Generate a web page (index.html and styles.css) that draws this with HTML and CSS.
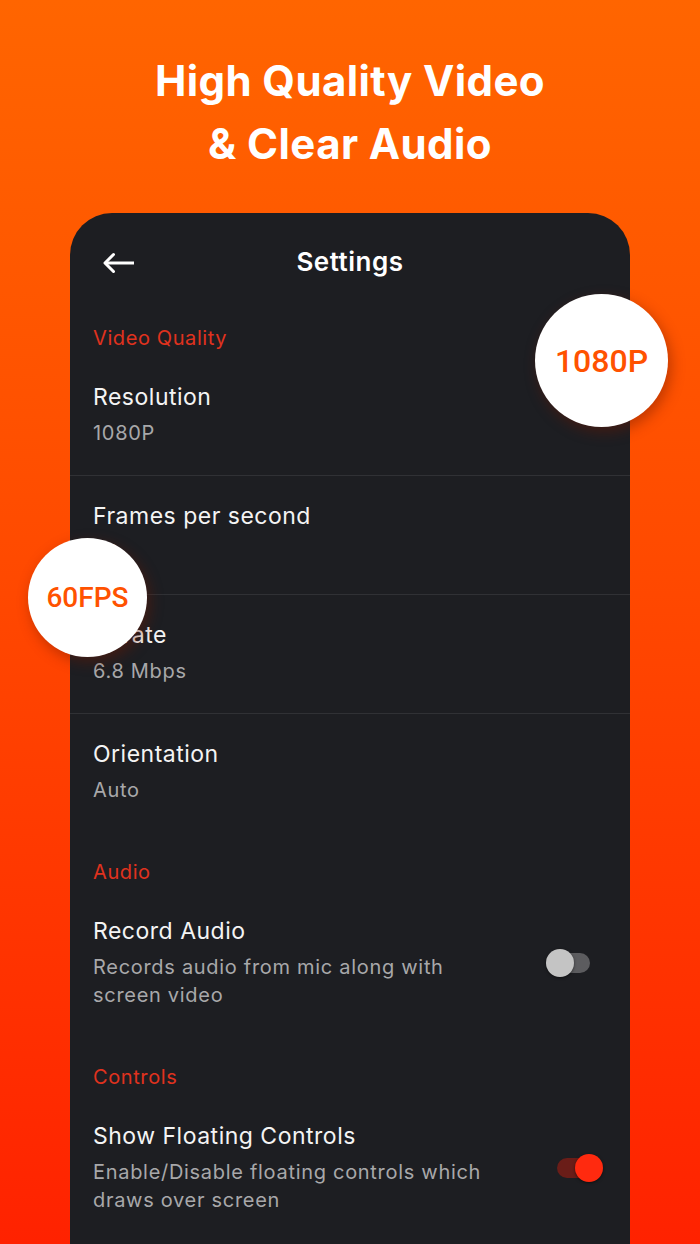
FILE: index.html
```html
<!DOCTYPE html>
<html lang="en">
<head>
    <meta charset="UTF-8">
    <meta name="viewport" content="width=device-width, initial-scale=1.0">
    <title>Settings</title>
    <link rel="stylesheet" href="styles.css">
</head>
<body>
    <h1 class="hero">High Quality Video<br>&amp; Clear Audio</h1>

    <div class="phone">
        <header class="topbar">
            <svg class="back" width="34" height="22" viewBox="0 0 34 22" fill="none" stroke="#fff" stroke-width="3" stroke-linejoin="round">
                <path d="M4 11H33" stroke-linecap="butt"/>
                <path d="M12.5 2.5L4 11L12.5 19.5" stroke-linecap="round"/>
            </svg>
            <h2>Settings</h2>
        </header>

        <section class="section">
            <h3>Video Quality</h3>
            <div class="item divided">
                <div class="title">Resolution</div>
                <div class="sub">1080P</div>
            </div>
            <div class="item divided">
                <div class="title">Frames per second</div>
                <div class="sub">60</div>
            </div>
            <div class="item divided">
                <div class="title">Bitrate</div>
                <div class="sub">6.8 Mbps</div>
            </div>
            <div class="item">
                <div class="title">Orientation</div>
                <div class="sub">Auto</div>
            </div>
        </section>

        <section class="section">
            <h3>Audio</h3>
            <div class="item toggle-row">
                <div class="text">
                    <div class="title">Record Audio</div>
                    <div class="sub desc">Records audio from mic along with screen video</div>
                </div>
                <span class="switch"></span>
            </div>
        </section>

        <section class="section">
            <h3>Controls</h3>
            <div class="item toggle-row near">
                <div class="text">
                    <div class="title">Show Floating Controls</div>
                    <div class="sub desc">Enable/Disable floating controls which draws over screen</div>
                </div>
                <span class="switch on"></span>
            </div>
        </section>
    </div>

    <div class="badge big">1080P</div>
    <div class="badge small">60FPS</div>
</body>
</html>
```

FILE: styles.css
```css
body {
    margin: 0;
    height: 1244px;
    overflow: hidden;
    position: relative;
    font-family: Inter, "Noto Sans", sans-serif;
    background: linear-gradient(180deg, #ff6500 0%, #ff4a00 45%, #ff2200 100%);
}
.hero {
    margin: 0;
    padding-top: 49px;
    height: 213px;
    box-sizing: border-box;
    text-align: center;
    color: #fff;
    font-size: 42px;
    font-weight: 700;
    line-height: 63px;
    letter-spacing: 0.4px;
}
.phone {
    margin: 0 70px;
    height: 1031px;
    background: #1d1e22;
    border-radius: 42px 42px 0 0;
}
.topbar {
    height: 96px;
    display: flex;
    align-items: center;
    justify-content: center;
    position: relative;
}
.topbar h2 {
    margin: 0;
    color: #fff;
    font-size: 26px;
    font-weight: 600;
    letter-spacing: 0.5px;
}
.back {
    position: absolute;
    left: 31px;
    top: 39px;
}
.section {
    padding-top: 28px;
}
.section:first-of-type {
    padding-top: 17px;
}
.section h3 {
    margin: 0 0 7px;
    padding-left: 23px;
    color: #e0321e;
    font-size: 20px;
    font-weight: 400;
    line-height: 24px;
    letter-spacing: 0.6px;
}
.item {
    padding: 25px 23px 28px;
}
.item.divided {
    border-bottom: 1px solid #303135;
}
.title {
    color: #f4f4f4;
    font-size: 23px;
    line-height: 30px;
    letter-spacing: 0.5px;
}
.sub {
    margin-top: 7px;
    color: #a8a8aa;
    font-size: 20px;
    line-height: 28px;
    letter-spacing: 0.7px;
}
.desc {
    max-width: 410px;
}
.toggle-row {
    display: flex;
    align-items: center;
    justify-content: space-between;
    padding-right: 38px;
}
.toggle-row.near {
    padding-right: 27px;
}
.switch {
    position: relative;
    width: 46px;
    height: 28px;
    flex-shrink: 0;
}
.switch::before {
    content: "";
    position: absolute;
    left: 4px;
    right: 2px;
    top: 4px;
    height: 20px;
    border-radius: 10px;
    background: #5c5c5f;
}
.switch::after {
    content: "";
    position: absolute;
    left: 0;
    top: 0;
    width: 28px;
    height: 28px;
    border-radius: 50%;
    background: #c4c4c4;
    box-shadow: 0 1px 3px rgba(0, 0, 0, 0.5);
}
.switch.on::before {
    left: 0;
    right: 6px;
    background: #6a1d18;
}
.switch.on::after {
    left: auto;
    right: 0;
    background: #ff2a0f;
}
.badge {
    position: absolute;
    display: flex;
    align-items: center;
    justify-content: center;
    border-radius: 50%;
    background: #fff;
    color: #ff5200;
    font-family: Roboto, sans-serif;
    font-weight: 500;
    box-shadow: 3px 5px 14px rgba(110, 25, 0, 0.45);
}
.badge.big {
    left: 535px;
    top: 294px;
    width: 133px;
    height: 133px;
    font-size: 32px;
}
.badge.small {
    left: 28px;
    top: 538px;
    width: 119px;
    height: 119px;
    font-size: 28px;
}
```
